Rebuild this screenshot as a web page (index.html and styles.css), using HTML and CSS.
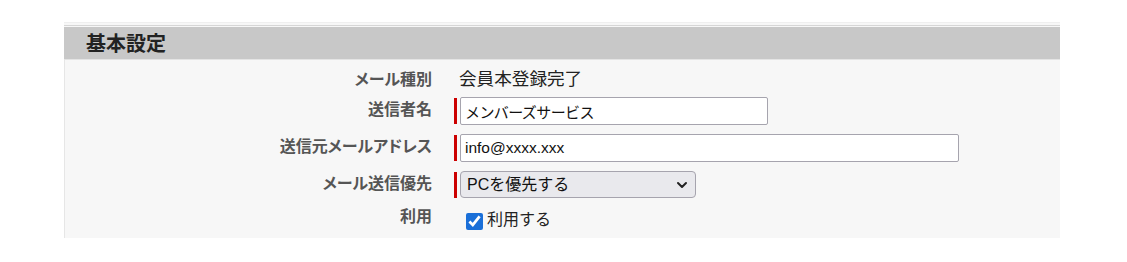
FILE: index.html
```html
<!DOCTYPE html>
<html lang="ja">
<head>
<meta charset="utf-8">
<title>基本設定</title>
<link rel="stylesheet" href="styles.css">
</head>
<body>
<section class="panel">
  <div class="panel-cap"></div>
  <h2 class="panel-head">基本設定</h2>
  <div class="form">
    <div class="row row-first">
      <div class="label">メール種別</div>
      <div class="value text">会員本登録完了</div>
    </div>
    <div class="row">
      <div class="label">送信者名</div>
      <div class="value"><span class="req"></span><input class="field field-name" type="text" value="メンバーズサービス"></div>
    </div>
    <div class="row">
      <div class="label">送信元メールアドレス</div>
      <div class="value"><span class="req"></span><input class="field field-mail" type="text" value="info@xxxx.xxx"></div>
    </div>
    <div class="row row-select">
      <div class="label">メール送信優先</div>
      <div class="value"><span class="req"></span>
        <div class="select-wrap">
          <select class="select"><option>PCを優先する</option></select>
          <svg class="chev" width="12" height="8" viewBox="0 0 12 8"><path d="M2 2 L6 6 L10 2" fill="none" stroke="#222" stroke-width="2" stroke-linecap="round" stroke-linejoin="round"/></svg>
        </div>
      </div>
    </div>
    <div class="row row-last">
      <div class="label">利用</div>
      <div class="value"><label class="check"><input type="checkbox" checked><span>利用する</span></label></div>
    </div>
  </div>
</section>
</body>
</html>
```
FILE: styles.css
```css
html, body {
  margin: 0;
  padding: 0;
  background: #ffffff;
}
body {
  font-family: "Noto Sans CJK JP", "Noto Sans", sans-serif;
  color: #222;
}
.panel {
  margin: 22px 0 0 64px;
  width: 996px;
  border-top: 1px solid #efefef;
  background: #f7f7f7;
}
.panel-cap {
  height: 2px;
  border-bottom: 1px solid #d6d6d6;
  background: #f7f7f7;
  margin-bottom: 1px;
}
.panel-head {
  margin: 0;
  height: 32px;
  line-height: 32px;
  background: #c8c8c8;
  border-bottom: 1px solid #e4e4e4;
  padding-left: 22px;
  font-size: 20px;
  font-weight: bold;
  color: #222;
}
.form {
  border-left: 1px solid #e6e6e6;
  height: 178px;
}
.row {
  display: grid;
  grid-template-columns: 367px 1fr;
  column-gap: 22px;
  align-items: start;
  height: 37px;
}
.row-first {
  height: 36px;
  align-items: center;
}
.row-select {
  height: 34px;
}
.row-last {
  height: 35px;
}
.label {
  text-align: right;
  font-size: 16px;
  line-height: 20px;
  font-weight: bold;
  color: #555;
  font-feature-settings: "palt";
  padding-top: 2px;
}
.row-first .label {
  padding-top: 0;
}
.row-last .label {
  padding-top: 1px;
}
.value {
  display: flex;
  align-items: flex-start;
}
.text {
  font-size: 17.6px;
  line-height: 20px;
  padding-left: 5px;
  color: #222;
}
.req {
  width: 3px;
  height: 26px;
  margin-top: 2px;
  background: #cc0000;
  margin-right: 3px;
  flex: none;
}
.field {
  box-sizing: border-box;
  margin: 1px 0 0 0;
  height: 28px;
  border: 1px solid #a6a4ae;
  border-radius: 2px;
  background: #fff;
  padding: 0 4px;
  font-family: "Liberation Sans", "Noto Sans CJK JP", sans-serif;
  font-size: 15px;
  color: #111;
  outline: none;
}
.field-name {
  width: 308px;
  letter-spacing: -0.6px;
}
.field-mail {
  width: 499px;
  font-size: 15.5px;
}
.select-wrap {
  position: relative;
  margin-top: 1px;
}
.select {
  appearance: none;
  -webkit-appearance: none;
  box-sizing: border-box;
  width: 236px;
  height: 27px;
  margin: 0;
  border: 1px solid #a6a4ae;
  border-radius: 4px;
  background: #e9e9ed;
  padding: 0 4px 0 6px;
  font-family: "Liberation Sans", "Noto Sans CJK JP", sans-serif;
  font-size: 16px;
  color: #111;
}
.chev {
  position: absolute;
  right: 8px;
  top: 10px;
}
.check {
  display: flex;
  align-items: flex-start;
  margin-top: 4px;
  padding-left: 12px;
  font-size: 16px;
  line-height: 20px;
  color: #222;
}
.check input {
  width: 17px;
  height: 17px;
  margin: 5px 4px 0 0;
  accent-color: #1a6fd8;
}
```
